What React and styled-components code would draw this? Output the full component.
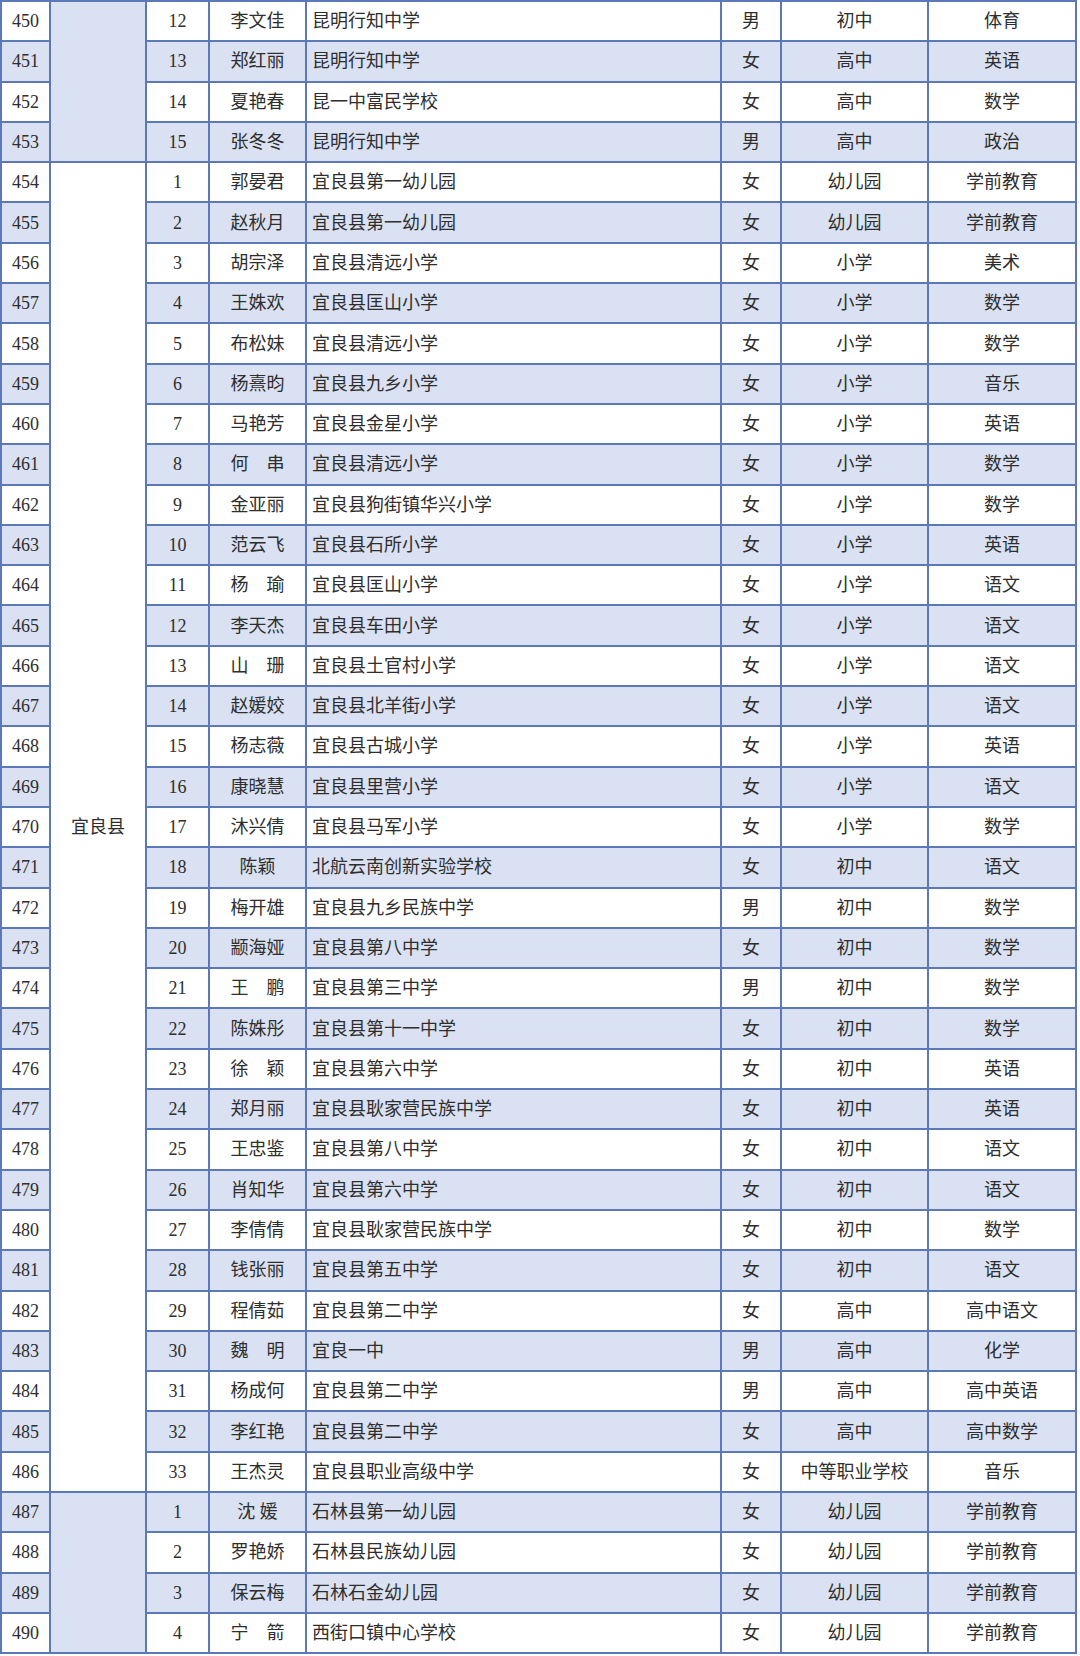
import styled, { createGlobalStyle } from 'styled-components';

const GlobalStyle = createGlobalStyle`
  html, body {
    margin: 0;
    padding: 0;
    background: #ffffff;
  }
  body {
    font-family: "Liberation Serif", "Noto Sans CJK SC", serif;
    color: #2e2e2e;
  }
`;

const rows = [
  ['450', '12', '李文佳', '昆明行知中学', '男', '初中', '体育'],
  ['451', '13', '郑红丽', '昆明行知中学', '女', '高中', '英语'],
  ['452', '14', '夏艳春', '昆一中富民学校', '女', '高中', '数学'],
  ['453', '15', '张冬冬', '昆明行知中学', '男', '高中', '政治'],
  ['454', '1', '郭晏君', '宜良县第一幼儿园', '女', '幼儿园', '学前教育'],
  ['455', '2', '赵秋月', '宜良县第一幼儿园', '女', '幼儿园', '学前教育'],
  ['456', '3', '胡宗泽', '宜良县清远小学', '女', '小学', '美术'],
  ['457', '4', '王姝欢', '宜良县匡山小学', '女', '小学', '数学'],
  ['458', '5', '布松妹', '宜良县清远小学', '女', '小学', '数学'],
  ['459', '6', '杨熹昀', '宜良县九乡小学', '女', '小学', '音乐'],
  ['460', '7', '马艳芳', '宜良县金星小学', '女', '小学', '英语'],
  ['461', '8', '何　串', '宜良县清远小学', '女', '小学', '数学'],
  ['462', '9', '金亚丽', '宜良县狗街镇华兴小学', '女', '小学', '数学'],
  ['463', '10', '范云飞', '宜良县石所小学', '女', '小学', '英语'],
  ['464', '11', '杨　瑜', '宜良县匡山小学', '女', '小学', '语文'],
  ['465', '12', '李天杰', '宜良县车田小学', '女', '小学', '语文'],
  ['466', '13', '山　珊', '宜良县土官村小学', '女', '小学', '语文'],
  ['467', '14', '赵媛姣', '宜良县北羊街小学', '女', '小学', '语文'],
  ['468', '15', '杨志薇', '宜良县古城小学', '女', '小学', '英语'],
  ['469', '16', '康晓慧', '宜良县里营小学', '女', '小学', '语文'],
  ['470', '17', '沐兴倩', '宜良县马军小学', '女', '小学', '数学'],
  ['471', '18', '陈颖', '北航云南创新实验学校', '女', '初中', '语文'],
  ['472', '19', '梅开雄', '宜良县九乡民族中学', '男', '初中', '数学'],
  ['473', '20', '颛海娅', '宜良县第八中学', '女', '初中', '数学'],
  ['474', '21', '王　鹏', '宜良县第三中学', '男', '初中', '数学'],
  ['475', '22', '陈姝彤', '宜良县第十一中学', '女', '初中', '数学'],
  ['476', '23', '徐　颖', '宜良县第六中学', '女', '初中', '英语'],
  ['477', '24', '郑月丽', '宜良县耿家营民族中学', '女', '初中', '英语'],
  ['478', '25', '王忠鉴', '宜良县第八中学', '女', '初中', '语文'],
  ['479', '26', '肖知华', '宜良县第六中学', '女', '初中', '语文'],
  ['480', '27', '李倩倩', '宜良县耿家营民族中学', '女', '初中', '数学'],
  ['481', '28', '钱张丽', '宜良县第五中学', '女', '初中', '语文'],
  ['482', '29', '程倩茹', '宜良县第二中学', '女', '高中', '高中语文'],
  ['483', '30', '魏　明', '宜良一中', '男', '高中', '化学'],
  ['484', '31', '杨成何', '宜良县第二中学', '男', '高中', '高中英语'],
  ['485', '32', '李红艳', '宜良县第二中学', '女', '高中', '高中数学'],
  ['486', '33', '王杰灵', '宜良县职业高级中学', '女', '中等职业学校', '音乐'],
  ['487', '1', '沈 媛', '石林县第一幼儿园', '女', '幼儿园', '学前教育'],
  ['488', '2', '罗艳娇', '石林县民族幼儿园', '女', '幼儿园', '学前教育'],
  ['489', '3', '保云梅', '石林石金幼儿园', '女', '幼儿园', '学前教育'],
  ['490', '4', '宁　箭', '西街口镇中心学校', '女', '幼儿园', '学前教育'],
];

// merged county cells: first row index, span, label, shaded
const groups = {
  0: { span: 4, label: '', shade: true },
  4: { span: 33, label: '宜良县', shade: false },
  37: { span: 4, label: '', shade: true },
};

const Sheet = styled.div`
  display: grid;
  grid-template-columns: 47px 94px 61px 95px 413px 58px 145px 146px;
  grid-template-rows: repeat(41, 38.3px);
  gap: 2px;
  padding: 2px;
  width: max-content;
  background: #5b79b9;
`;

const Cell = styled.div`
  display: flex;
  align-items: center;
  justify-content: ${({ $left }) => ($left ? 'flex-start' : 'center')};
  padding-left: ${({ $left }) => ($left ? '5px' : '0')};
  background: ${({ $shade }) => ($shade ? '#d9e1f2' : '#ffffff')};
  font-size: 18px;
  line-height: 1;
  white-space: pre;
  overflow: hidden;
`;

const County = styled(Cell)`
  grid-row: span ${({ $span }) => $span};
`;

export default function App() {
  return (
    <>
      <GlobalStyle />
      <Sheet>
        {rows.map((r, i) => {
          const shade = i % 2 === 1;
          const g = groups[i];
          return [
            <Cell key={`a${i}`} $shade={shade}>{r[0]}</Cell>,
            g ? (
              <County key={`g${i}`} $span={g.span} $shade={g.shade}>
                {g.label}
              </County>
            ) : null,
            <Cell key={`b${i}`} $shade={shade}>{r[1]}</Cell>,
            <Cell key={`c${i}`} $shade={shade}>{r[2]}</Cell>,
            <Cell key={`d${i}`} $shade={shade} $left>{r[3]}</Cell>,
            <Cell key={`e${i}`} $shade={shade}>{r[4]}</Cell>,
            <Cell key={`f${i}`} $shade={shade}>{r[5]}</Cell>,
            <Cell key={`h${i}`} $shade={shade}>{r[6]}</Cell>,
          ];
        })}
      </Sheet>
    </>
  );
}
